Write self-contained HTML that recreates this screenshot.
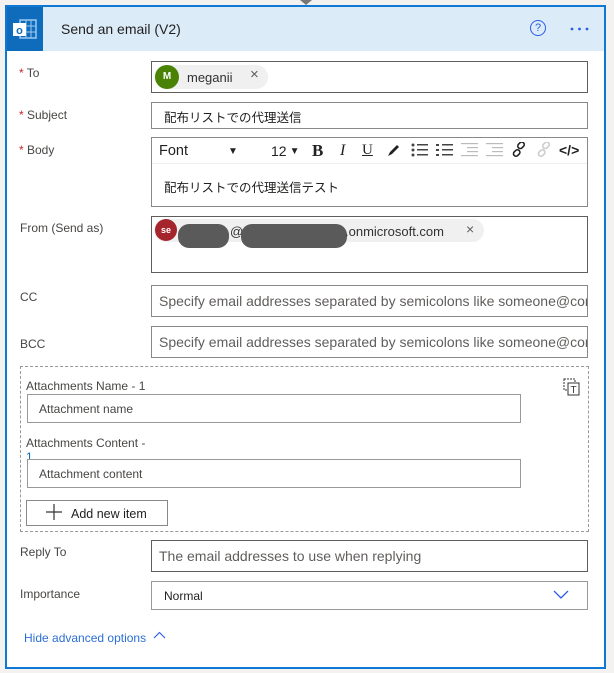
<!DOCTYPE html>
<html><head><meta charset="utf-8"><style>
*{box-sizing:border-box;margin:0;padding:0}
body{width:614px;height:673px;background:#f3f2f1;font-family:"Liberation Sans","Noto Sans CJK JP",sans-serif;position:relative;overflow:hidden;color:#323130}
.a{position:absolute}
.card{left:5px;top:5px;width:601px;height:664px;border:2px solid #0f78d4;background:#fff}
.hdr{left:7px;top:7px;width:597px;height:44px;background:#dcebf8}
.lbl{font-size:12px;color:#484644}
.req{color:#c4262e}
.inp{border:1px solid #8a8886;background:#fff;font-size:13px}
.ph{color:#605e5c;font-size:14px;padding-left:7px;white-space:nowrap;overflow:hidden}
.tb{font-size:14px;color:#222;display:flex;align-items:center}
</style></head><body>
<div class="a" style="left:300px;top:0;width:0;height:0;border-left:6px solid transparent;border-right:6px solid transparent;border-top:5px solid #777"></div>
<div class="a card"></div>
<div class="a hdr"></div>
<div class="a" style="left:7px;top:7px;width:36px;height:44px;background:#0f6cbd"></div>
<svg class="a" style="left:12px;top:18px" width="26" height="24" viewBox="0 0 26 24"><rect x="8" y="2" width="16" height="18" fill="none" stroke="#9cc8f0" stroke-width="1.5"/><line x1="14" y1="2" x2="14" y2="20" stroke="#9cc8f0"/><line x1="19" y1="2" x2="19" y2="20" stroke="#9cc8f0"/><line x1="8" y1="8" x2="24" y2="8" stroke="#9cc8f0"/><line x1="8" y1="14" x2="24" y2="14" stroke="#9cc8f0"/><rect x="1" y="5" width="13" height="13" fill="#fff"/><text x="7.5" y="16" font-size="11" font-weight="bold" fill="#0f6cbd" text-anchor="middle" font-family="Liberation Sans">o</text></svg>
<div class="a" style="left:61px;top:21px;font-size:14px;color:#201f1e">Send an email (V2)</div>
<div class="a" style="left:530px;top:20px;width:16px;height:16px;border:1.3px solid #2b5ce6;border-radius:50%;font-size:11px;color:#2b5ce6;text-align:center;line-height:14px">?</div>
<svg class="a" style="left:570px;top:27px" width="20" height="4"><circle cx="2" cy="2" r="1.4" fill="#2b5ce6"/><circle cx="9.5" cy="2" r="1.4" fill="#2b5ce6"/><circle cx="17" cy="2" r="1.4" fill="#2b5ce6"/></svg>

<div class="a lbl" style="left:19px;top:66px"><span class="req">*</span> To</div>
<div class="a inp" style="left:151px;top:61px;width:437px;height:32px;border-color:#605e5c"></div>
<div class="a" style="left:154px;top:65px;width:114px;height:24px;background:#f0f0f0;border-radius:12px"></div>
<div class="a" style="left:155px;top:65px;width:24px;height:24px;border-radius:50%;background:#498205;color:#fff;font-size:10px;font-weight:bold;text-align:center;line-height:24px">M</div>
<div class="a" style="left:187px;top:70px;font-size:13px;color:#323130">meganii</div>
<div class="a" style="left:250px;top:66px;font-size:15px;color:#605e5c">×</div>

<div class="a lbl" style="left:19px;top:108px"><span class="req">*</span> Subject</div>
<div class="a inp" style="left:151px;top:102px;width:437px;height:27px"></div>
<div class="a" style="left:164px;top:107px;font-size:12.5px;color:#201f1e">配布リストでの代理送信</div>

<div class="a lbl" style="left:19px;top:143px"><span class="req">*</span> Body</div>
<div class="a inp" style="left:151px;top:137px;width:437px;height:70px"></div>
<div class="a" style="left:152px;top:138px;width:435px;height:26px;border-bottom:1px solid #eee"></div>
<div class="a tb" style="left:159px;top:143px;width:100px;font-size:14.5px">Font<span style="margin-left:40px;font-size:10px">▼</span></div>
<div class="a tb" style="left:271px;top:143px">12<span style="font-size:10px;margin-left:3px">▼</span></div>
<div class="a tb" style="left:312px;top:141px;font-family:'Liberation Serif';font-weight:bold;font-size:17px">B</div>
<div class="a tb" style="left:340px;top:142px;font-family:'Liberation Serif';font-style:italic;font-size:16px">I</div>
<div class="a tb" style="left:362px;top:142px;font-family:'Liberation Serif';text-decoration:underline;font-size:15px">U</div>
<svg class="a" style="left:386px;top:142px" width="16" height="16"><path d="M2 14 L4 10 L11 3 L13 5 L6 12 Z" fill="#222"/></svg>
<svg class="a" style="left:411px;top:143px" width="18" height="14"><g fill="#444"><circle cx="2" cy="2" r="1.5"/><circle cx="2" cy="7" r="1.5"/><circle cx="2" cy="12" r="1.5"/><rect x="6" y="1" width="11" height="1.5"/><rect x="6" y="6" width="11" height="1.5"/><rect x="6" y="11" width="11" height="1.5"/></g></svg>
<svg class="a" style="left:436px;top:143px" width="18" height="14"><g fill="#444"><rect x="0" y="1" width="3" height="2"/><rect x="0" y="6" width="3" height="2"/><rect x="0" y="11" width="3" height="2"/><rect x="6" y="1" width="11" height="1.5"/><rect x="6" y="6" width="11" height="1.5"/><rect x="6" y="11" width="11" height="1.5"/></g></svg>
<svg class="a" style="left:461px;top:143px" width="18" height="14"><g fill="#bbb"><rect x="0" y="0" width="17" height="1.2"/><rect x="6" y="4" width="11" height="1.2"/><rect x="6" y="8" width="11" height="1.2"/><rect x="0" y="12" width="17" height="1.2"/></g></svg>
<svg class="a" style="left:486px;top:143px" width="18" height="14"><g fill="#bbb"><rect x="0" y="0" width="17" height="1.2"/><rect x="6" y="4" width="11" height="1.2"/><rect x="6" y="8" width="11" height="1.2"/><rect x="0" y="12" width="17" height="1.2"/></g></svg>
<svg class="a" style="left:511px;top:142px" width="16" height="16"><g fill="none" stroke="#222" stroke-width="1.6"><rect x="7" y="1" width="7" height="5" rx="2.5" transform="rotate(-45 10 4)"/><rect x="2" y="9" width="7" height="5" rx="2.5" transform="rotate(-45 5 11)"/></g></svg>
<svg class="a" style="left:536px;top:142px" width="16" height="16"><g fill="none" stroke="#ccc" stroke-width="1.6"><rect x="7" y="1" width="7" height="5" rx="2.5" transform="rotate(-45 10 4)"/><rect x="2" y="9" width="7" height="5" rx="2.5" transform="rotate(-45 5 11)"/></g></svg>
<div class="a tb" style="left:559px;top:142px;font-weight:bold;font-size:14px">&lt;/&gt;</div>
<div class="a" style="left:164px;top:177px;font-size:12.5px;color:#201f1e">配布リストでの代理送信テスト</div>

<div class="a lbl" style="left:20px;top:221px">From (Send as)</div>
<div class="a inp" style="left:151px;top:216px;width:437px;height:57px;border-color:#605e5c"></div>
<div class="a" style="left:154px;top:219px;width:330px;height:23px;background:#f0f0f0;border-radius:12px"></div>
<div class="a" style="left:155px;top:219px;width:22px;height:22px;border-radius:50%;background:#a4262c;color:#fff;font-size:9px;font-weight:bold;text-align:center;line-height:22px">se</div>
<div class="a" style="left:178px;top:224px;width:51px;height:24px;background:#5a5a5a;border-radius:11px"></div>
<div class="a" style="left:230px;top:224px;font-size:13px">@</div>
<div class="a" style="left:241px;top:224px;width:106px;height:24px;background:#5a5a5a;border-radius:11px"></div>
<div class="a" style="left:345px;top:224px;font-size:13px;color:#323130">.onmicrosoft.com</div>
<div class="a" style="left:466px;top:221px;font-size:14px;color:#605e5c">×</div>

<div class="a lbl" style="left:20px;top:290px">CC</div>
<div class="a inp ph" style="left:151px;top:285px;width:437px;height:32px;line-height:30px">Specify email addresses separated by semicolons like someone@contoso.com</div>
<div class="a lbl" style="left:20px;top:337px">BCC</div>
<div class="a inp ph" style="left:151px;top:326px;width:437px;height:32px;line-height:30px">Specify email addresses separated by semicolons like someone@contoso.com</div>

<div class="a" style="left:20px;top:366px;width:569px;height:166px;border:1px dashed #999"></div>
<div class="a lbl" style="left:26px;top:379px">Attachments Name - 1</div>
<svg class="a" style="left:563px;top:378px" width="18" height="18"><rect x="1" y="1" width="11" height="11" fill="none" stroke="#333" stroke-dasharray="2 1"/><rect x="5" y="5" width="11" height="12" fill="#fff" stroke="#333"/><text x="10.5" y="15" font-size="10" text-anchor="middle" font-family="Liberation Sans" fill="#333">T</text></svg>
<div class="a inp" style="left:27px;top:394px;width:494px;height:29px;font-size:12px;color:#484644;padding:7px 11px;border-color:#999">Attachment name</div>
<div class="a lbl" style="left:26px;top:436px">Attachments Content -</div>
<div class="a lbl" style="left:26px;top:450px;color:#0f6cbd">1</div>
<div class="a inp" style="left:27px;top:459px;width:494px;height:29px;font-size:12px;color:#484644;padding:7px 11px;border-color:#999">Attachment content</div>
<div class="a" style="left:26px;top:500px;width:142px;height:26px;border:1px solid #8a8886;background:#fff"></div>
<svg class="a" style="left:46px;top:504px" width="16" height="16"><path d="M8 0 V16 M0 8 H16" stroke="#333" stroke-width="1.2"/></svg>
<div class="a" style="left:71px;top:507px;font-size:12.5px;color:#201f1e">Add new item</div>

<div class="a lbl" style="left:20px;top:545px">Reply To</div>
<div class="a inp ph" style="left:151px;top:540px;width:437px;height:32px;line-height:30px;border-color:#605e5c">The email addresses to use when replying</div>
<div class="a lbl" style="left:20px;top:587px">Importance</div>
<div class="a inp" style="left:151px;top:581px;width:437px;height:29px;border-color:#999"></div>
<div class="a" style="left:164px;top:589px;font-size:12px;color:#201f1e">Normal</div>
<svg class="a" style="left:553px;top:590px" width="16" height="10"><path d="M1 1 L8 8 L15 1" fill="none" stroke="#2b5ce6" stroke-width="1.3"/></svg>
<div class="a" style="left:24px;top:631px;font-size:12px;color:#2b6fd6">Hide advanced options</div>
<svg class="a" style="left:153px;top:631px" width="13" height="9"><path d="M1 7 L6.5 1.5 L12 7" fill="none" stroke="#2b5ce6" stroke-width="1.1"/></svg>
</body></html>
